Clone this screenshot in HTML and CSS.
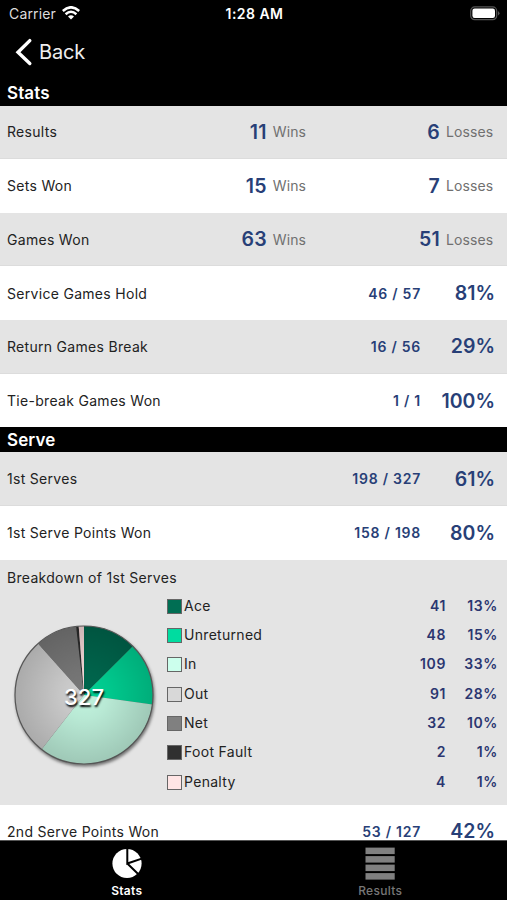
FILE: index.html
```
<!DOCTYPE html>
<html lang="en">

<head>
    <meta charset="utf-8">
    <title>Stats</title>
    <link rel="stylesheet" href="styles.css">
</head>

<body>
    <div class="app">
        <div class="statusbar">
            <div class="carrier">
                <span>Carrier</span>
                <svg class="wifi" width="18" height="14" viewBox="0 0 18 14">
                    <path d="M0.8 5 Q9 -2.4 17.2 5" fill="none" stroke="#fff" stroke-width="2.6"/>
                    <path d="M3.6 8.2 Q9 3.4 14.4 8.2" fill="none" stroke="#fff" stroke-width="2.5"/>
                    <path d="M6 10.6 Q9 7.8 12 10.6 L9 13.6 Z" fill="#fff"/>
                </svg>
            </div>
            <div class="clock">1:28 AM</div>
            <svg class="battery" width="30" height="15" viewBox="0 0 30 15">
                <rect x="0.7" y="0.9" width="26" height="12.8" rx="4" fill="none" stroke="#555" stroke-width="1.2"/>
                <rect x="2.4" y="2.6" width="22.6" height="9.4" rx="2.2" fill="#fff"/>
                <path d="M28 5 Q31 7.3 28 9.6 Z" fill="#555"/>
            </svg>
        </div>
        <div class="navbar">
            <svg class="chevron" width="18" height="28" viewBox="0 0 18 28">
                <path d="M14.8 2.6 L3 14.2 L14.8 25.5" fill="none" stroke="#fff" stroke-width="3.4" stroke-linecap="round"/>
            </svg>
            <span>Back</span>
        </div>

        <div class="content">
            <h2>Stats</h2>
            <div class="row grey"><span class="label">Results</span><b class="num">11</b><span class="unit">Wins</span><b class="num second">6</b><span class="unit">Losses</span></div>
            <div class="row"><span class="label">Sets Won</span><b class="num">15</b><span class="unit">Wins</span><b class="num second">7</b><span class="unit">Losses</span></div>
            <div class="row grey"><span class="label">Games Won</span><b class="num">63</b><span class="unit">Wins</span><b class="num second">51</b><span class="unit">Losses</span></div>
            <div class="row"><span class="label">Service Games Hold</span><b class="ratio">46 / 57</b><b class="percent">81%</b></div>
            <div class="row grey"><span class="label">Return Games Break</span><b class="ratio">16 / 56</b><b class="percent">29%</b></div>
            <div class="row"><span class="label">Tie-break Games Won</span><b class="ratio">1 / 1</b><b class="percent">100%</b></div>

            <h2 class="serve">Serve</h2>
            <div class="row grey"><span class="label">1st Serves</span><b class="ratio">198 / 327</b><b class="percent">61%</b></div>
            <div class="row"><span class="label">1st Serve Points Won</span><b class="ratio">158 / 198</b><b class="percent">80%</b></div>
            <div class="breakdown">
                <div class="title">Breakdown of 1st Serves</div>
                <div class="chart">
                    <svg class="pie" width="150" height="150" viewBox="-75 -75 150 150">
                        <defs>
                            <radialGradient id="shade" gradientUnits="userSpaceOnUse" cx="0" cy="0" r="69">
                                <stop offset="0" stop-color="#000" stop-opacity="0.02"/>
                                <stop offset="0.35" stop-color="#000" stop-opacity="0.07"/>
                                <stop offset="1" stop-color="#000" stop-opacity="0.2"/>
                            </radialGradient>
                        </defs>
                        <g class="disc">
                            <path fill="#006a50" d="M0 0 L0 -69 A69 69 0 0 1 48.9 -48.7 Z"/>
                            <path fill="#00d898" d="M0 0 L48.9 -48.7 A69 69 0 0 1 68.3 9.6 Z"/>
                            <path fill="#c6fae4" d="M0 0 L68.3 9.6 A69 69 0 0 1 -42.5 54.4 Z"/>
                            <path fill="#d5d5d5" d="M0 0 L-42.5 54.4 A69 69 0 0 1 -46 -51.4 Z"/>
                            <path fill="#7c7c7c" d="M0 0 L-46 -51.4 A69 69 0 0 1 -7.9 -68.5 Z"/>
                            <path fill="#2d2d2d" d="M0 0 L-7.9 -68.5 A69 69 0 0 1 -5.3 -68.8 Z"/>
                            <path fill="#ffe2e2" d="M0 0 L-5.3 -68.8 A69 69 0 0 1 0 -69 Z"/>
                            <circle r="69" fill="url(#shade)" stroke="#555" stroke-width="1.2"/>
                        </g>
                        <text class="total" x="0" y="10" text-anchor="middle">327</text>
                    </svg>
                    <div class="legend">
                        <div class="item"><i class="swatch ace"></i><span>Ace</span><b>41</b><b>13%</b></div>
                        <div class="item"><i class="swatch unreturned"></i><span>Unreturned</span><b>48</b><b>15%</b></div>
                        <div class="item"><i class="swatch in"></i><span>In</span><b>109</b><b>33%</b></div>
                        <div class="item"><i class="swatch out"></i><span>Out</span><b>91</b><b>28%</b></div>
                        <div class="item"><i class="swatch net"></i><span>Net</span><b>32</b><b>10%</b></div>
                        <div class="item"><i class="swatch fault"></i><span>Foot Fault</span><b>2</b><b>1%</b></div>
                        <div class="item"><i class="swatch penalty"></i><span>Penalty</span><b>4</b><b>1%</b></div>
                    </div>
                </div>
            </div>
            <div class="row"><span class="label">2nd Serve Points Won</span><b class="ratio">53 / 127</b><b class="percent">42%</b></div>
        </div>

        <div class="tabbar">
            <div class="tab active">
                <svg width="32" height="34" viewBox="0 0 32 34">
                    <circle cx="16" cy="17.5" r="14.6" fill="#fff"/>
                    <path d="M16.3 2 V17.5 L31.5 12.4 M16.3 17.5 L27.4 28.2" fill="none" stroke="#000" stroke-width="2"/>
                </svg>
                <span>Stats</span>
            </div>
            <div class="tab">
                <svg width="32" height="34" viewBox="0 0 32 34" fill="#808080">
                    <rect x="1.5" y="1.6" width="29.2" height="6.5"/>
                    <rect x="1.5" y="10.1" width="29.2" height="6.5"/>
                    <rect x="1.5" y="18.6" width="29.2" height="6.5"/>
                    <rect x="1.5" y="27.1" width="29.2" height="6.5"/>
                </svg>
                <span>Results</span>
            </div>
        </div>
    </div>
</body>

</html>
```
FILE: styles.css
```
* {
    box-sizing: border-box;
}

body {
    margin: 0;
    background-color: black;
    font-family: Inter, "Liberation Sans", sans-serif;
    font-size: 14px;
    letter-spacing: 0.3px;
    color: #222;
}

.app {
    display: flex;
    flex-direction: column;
    width: 507px;
    height: 900px;
    overflow: hidden;
}

.statusbar {
    flex: none;
    display: grid;
    grid-template-columns: 1fr auto 1fr;
    align-items: center;
    height: 27px;
    padding: 0 7px 0 9px;
    color: white;
}

.carrier {
    display: flex;
    align-items: center;
    gap: 6px;
    color: #ddd;
    letter-spacing: 0.15px;
}

.wifi {
    margin-top: -2px;
}

.clock {
    font-weight: 600;
    letter-spacing: 0.45px;
}

.battery {
    justify-self: end;
}

.navbar {
    flex: none;
    display: flex;
    align-items: center;
    gap: 6px;
    height: 50px;
    padding-left: 15px;
    color: #eee;
    font-size: 20px;
    letter-spacing: -0.2px;
}

.content {
    flex: 1;
    min-height: 0;
    overflow: hidden;
    background-color: white;
}

h2 {
    height: 28.5px;
    margin: 0;
    padding-left: 7px;
    background-color: black;
    color: white;
    font-size: 17px;
    font-weight: 600;
    letter-spacing: 0.1px;
    line-height: 32px;
}

.serve {
    height: 25px;
    line-height: 26px;
}

.row {
    display: flex;
    align-items: center;
    height: 53.65px;
    padding: 0 12px 0 7px;
}

.grey {
    background-color: #e4e4e4;
    border-bottom: 1px solid #dcdcdc;
}

.label {
    flex: 1;
}

.row b {
    color: #283f77;
    text-align: right;
}

.row .num {
    width: 60px;
    font-size: 19.5px;
    font-weight: 600;
    letter-spacing: 0.2px;
}

.row .second {
    width: 134px;
}

.unit {
    margin-left: 6px;
    color: #707070;
    letter-spacing: 0.1px;
}

.unit:last-child {
    width: 49px;
}

.row .ratio {
    font-weight: 600;
    letter-spacing: 0.75px;
}

.row .percent {
    width: 74px;
    font-size: 19.5px;
    font-weight: 600;
    letter-spacing: 0;
}

.breakdown {
    height: 245px;
    padding: 9px 9px 0 7px;
    background-color: #e4e4e4;
}

.title {
    height: 22px;
    line-height: 18px;
}

.chart {
    display: flex;
}

.pie {
    flex: none;
    margin: 29px 0 0 2px;
}

.disc {
    filter: drop-shadow(1px 2px 1.5px rgba(0, 0, 0, 0.5));
}

.total {
    fill: white;
    font-size: 22px;
    font-weight: 500;
    letter-spacing: 0;
    text-shadow: 1px 2px 2px black;
}

.legend {
    flex: 1;
    margin-left: 8px;
}

.item {
    display: grid;
    grid-template-columns: 17px 1fr 60px 52px;
    align-items: center;
    height: 29.3px;
}

.item b {
    color: #2b3670;
    font-weight: 600;
    letter-spacing: 0.6px;
    text-align: right;
}

.swatch {
    width: 15px;
    height: 15px;
    margin-top: 2px;
    border: 1px solid #666;
}

.ace {
    background-color: #006e53;
}

.unreturned {
    background-color: #00dca0;
}

.in {
    background-color: #ccffed;
}

.out {
    background-color: #d8d8d8;
}

.net {
    background-color: #808080;
}

.fault {
    background-color: #303030;
}

.penalty {
    background-color: #ffe5e5;
}

.tabbar {
    flex: none;
    display: flex;
    height: 60px;
    border-top: 1px solid #555;
    color: #777;
    font-size: 12px;
    font-weight: 500;
}

.tab {
    flex: 1;
    display: flex;
    flex-direction: column;
    align-items: center;
    gap: 3px;
    padding-top: 5px;
}

.active {
    color: white;
    font-weight: 600;
}
```
